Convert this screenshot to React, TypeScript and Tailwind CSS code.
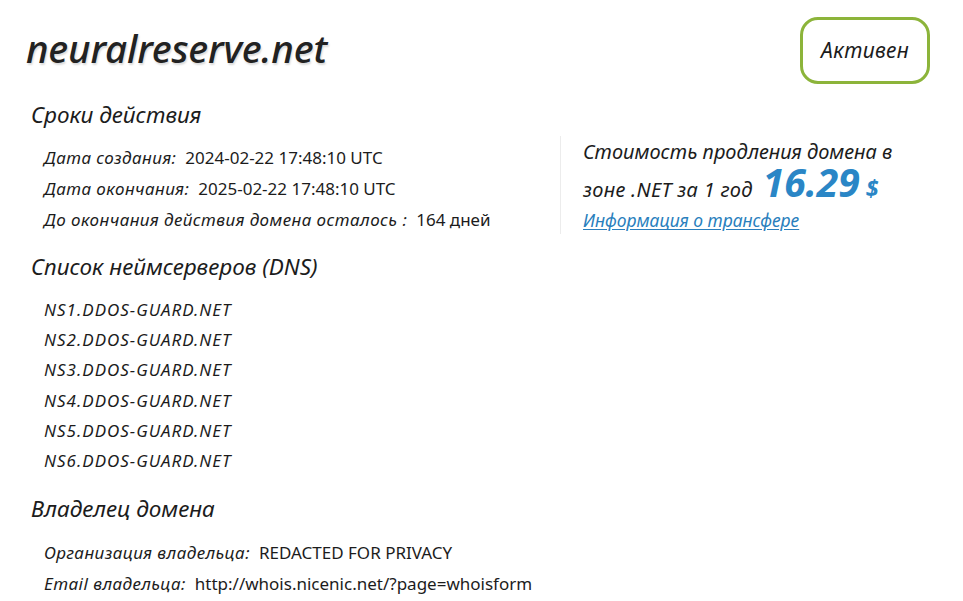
import React from "react";

const nameservers = [
  "NS1.DDOS-GUARD.NET",
  "NS2.DDOS-GUARD.NET",
  "NS3.DDOS-GUARD.NET",
  "NS4.DDOS-GUARD.NET",
  "NS5.DDOS-GUARD.NET",
  "NS6.DDOS-GUARD.NET",
];

const italic = "italic [font-family:'Noto_Sans',sans-serif]";
const plain = "[font-family:'Noto_Sans',sans-serif]";

function Row({ label, value }: { label: string; value: string }) {
  return (
    <div className="flex items-baseline h-[31px] leading-[31px]">
      <span className={`${italic} text-[17px] tracking-[0.45px] text-[#1c1c1c]`}>{label}</span>
      <span className={`${plain} text-[17px] text-[#1c1c1c] ml-[9px]`}>{value}</span>
    </div>
  );
}

function SectionTitle({ children }: { children: React.ReactNode }) {
  return (
    <h2 className={`${italic} text-[22.5px] leading-[30px] text-[#1c1c1c] pl-[31px]`}>{children}</h2>
  );
}

export default function App() {
  return (
    <div className="w-[963px] h-[601px] bg-white overflow-hidden">
      <header className="flex justify-between items-start pl-[26px] pr-[33px] pt-[17px]">
        <h1 className={`${italic} font-medium text-[38.5px] leading-[62px] text-[#222] tracking-[-0.2px] [text-shadow:1px_2px_2px_rgba(0,0,0,0.15)]`}>
          neuralreserve.net
        </h1>
        <div className="w-[130px] h-[67px] border-[3px] border-[#8cb43a] rounded-[18px] flex items-center justify-center">
          <span className={`${italic} text-[21px] tracking-[0.3px] text-[#1c1c1c]`}>Активен</span>
        </div>
      </header>

      <div className="flex mt-[16px]">
        <div className="w-[560px] shrink-0">
          <SectionTitle>Сроки действия</SectionTitle>
          <div className="pl-[44px] mt-[12px]">
            <Row label="Дата создания:" value="2024-02-22 17:48:10 UTC" />
            <Row label="Дата окончания:" value="2025-02-22 17:48:10 UTC" />
            <Row label="До окончания действия домена осталось :" value="164 дней" />
          </div>
        </div>
        <div className="border-l border-[#ececec] mt-[36px] h-[98px] pl-[22px] pt-[1px]">
          <p className={`${italic} text-[20px] leading-[30px] text-[#1c1c1c]`}>
            Стоимость продления домена в
          </p>
          <p className={`${italic} text-[20px] tracking-[0.3px] leading-[30px] text-[#1c1c1c] flex items-baseline`}>
            зоне .NET за 1 год
            <span className="inline-block font-bold text-[39px] tracking-[0px] leading-[30px] text-[#2a86c6] ml-[10px]">16.29</span>
            <span className="inline-block font-bold text-[23px] leading-[24px] text-[#2a86c6] ml-[6px]">$</span>
          </p>
          <a href="#" className={`${italic} block text-[17.5px] leading-[26px] text-[#2a7fbd] underline underline-offset-2 mt-[2px]`}>
            Информация о трансфере
          </a>
        </div>
      </div>

      <div className="mt-[17px]">
        <SectionTitle>Список неймсерверов (DNS)</SectionTitle>
        <ul className="pl-[44px] mt-[13px]">
          {nameservers.map((ns) => (
            <li key={ns} className={`${italic} text-[17px] tracking-[1px] leading-[30.2px] text-[#1c1c1c]`}>
              {ns}
            </li>
          ))}
        </ul>
      </div>

      <div className="mt-[18px]">
        <SectionTitle>Владелец домена</SectionTitle>
        <div className="pl-[44px] mt-[13px]">
          <Row label="Организация владельца:" value="REDACTED FOR PRIVACY" />
          <Row label="Email владельца:" value="http://whois.nicenic.net/?page=whoisform" />
        </div>
      </div>
    </div>
  );
}
